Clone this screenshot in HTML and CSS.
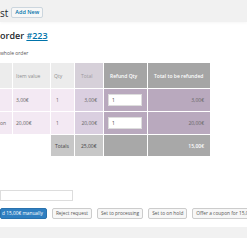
FILE: index.html
```html
<!DOCTYPE html>
<html>
<head>
<meta charset="utf-8">
<link rel="stylesheet" href="styles.css">
</head>
<body>
<header class="topbar">
  <h1 class="title">st</h1>
  <a class="add-new">Add New</a>
</header>
<main class="content">
  <h2 class="order-title">order <a class="order-link">#223</a></h2>
  <p class="note">whole order</p>
  <table class="refund">
    <colgroup>
      <col class="w-prod"><col class="w-value"><col class="w-qty"><col class="w-total"><col class="w-rq"><col class="w-ref">
    </colgroup>
    <thead>
      <tr>
        <th></th>
        <th>Item value</th>
        <th>Qty</th>
        <th class="c-total">Total</th>
        <th class="c-dark">Refund Qty</th>
        <th class="c-dark">Total to be refunded</th>
      </tr>
    </thead>
    <tbody>
      <tr>
        <td class="c-prod"></td>
        <td>3,00€</td>
        <td class="c-qty">1</td>
        <td class="c-total">3,00€</td>
        <td class="c-rq"><input class="qty-input" value="1"></td>
        <td class="c-ref">3,00€</td>
      </tr>
      <tr>
        <td class="c-prod">on</td>
        <td>20,00€</td>
        <td class="c-qty">1</td>
        <td class="c-total">20,00€</td>
        <td class="c-rq"><input class="qty-input" value="1"></td>
        <td class="c-ref">20,00€</td>
      </tr>
    </tbody>
    <tfoot>
      <tr>
        <td class="blank"></td>
        <td class="blank"></td>
        <td class="tot-label">Totals</td>
        <td class="tot-val">25,00€</td>
        <td class="tot-dark"></td>
        <td class="tot-dark tot-final">15,00€</td>
      </tr>
    </tfoot>
  </table>
  <input class="reason">
  <div class="actions">
    <button class="btn btn-primary">d 15,00€ manually</button>
    <button class="btn">Reject request</button>
    <button class="btn">Set to processing</button>
    <button class="btn">Set to on hold</button>
    <button class="btn">Offer a coupon for 15,00€</button>
  </div>
</main>
<div class="footer-band"></div>
</body>
</html>
```

FILE: styles.css
```css
html, body {
  margin: 0;
  padding: 0;
}
body {
  width: 247px;
  height: 247px;
  overflow: hidden;
  background: #fff;
  font-family: "Open Sans", "Liberation Sans", sans-serif;
  color: #444;
}
.topbar {
  height: 22px;
  box-sizing: border-box;
  padding-top: 3px;
  background: #f1f1f1;
  display: flex;
  align-items: center;
  gap: 3px;
  box-shadow: 0 1px 3px rgba(0,0,0,0.04);
}
.title {
  margin: 0;
  font-size: 10px;
  font-weight: 400;
  line-height: 1;
  color: #23282d;
}
.add-new {
  font-size: 5.5px;
  font-weight: 600;
  line-height: 7px;
  padding: 1px 3px;
  color: #0073aa;
  background: #f7f7f7;
  border: 1px solid #ccd6de;
  border-radius: 2px;
}
.content {
  display: flex;
  flex-direction: column;
  align-items: flex-start;
}
.order-title {
  margin: 8px 0 0;
  font-size: 9px;
  font-weight: 600;
  line-height: 12px;
  color: #23282d;
}
.order-link {
  color: #0073aa;
  text-decoration: underline;
}
.note {
  margin: 8px 0 0;
  font-size: 5px;
  line-height: 7px;
  color: #555;
}
.refund {
  margin-top: 6px;
  border-collapse: separate;
  border-spacing: 0;
  table-layout: fixed;
  width: 211px;
  font-size: 5px;
}
.w-prod { width: 13px; }
.w-value { width: 38px; }
.w-qty { width: 24px; }
.w-total { width: 29px; }
.w-rq { width: 44px; }
.w-ref { width: 63px; }
.refund th, .refund td {
  padding: 0 3px;
  border-right: 1px solid #fff;
  border-bottom: 1px solid #fff;
  white-space: nowrap;
  overflow: hidden;
  text-align: left;
}
.refund th {
  height: 25px;
  background: #ececec;
  color: #8c8c8c;
  font-weight: 400;
}
.refund th.c-total {
  background: #d6d0d9;
  color: #9c9a9e;
  padding-left: 6px;
}
.refund th.c-dark {
  background: #a5a5a5;
  color: #fff;
  font-weight: 600;
  padding-left: 6px;
}
.refund tbody td {
  height: 22px;
  background: #f3e9f3;
  color: #666;
}
.refund td.c-prod {
  padding-left: 0;
}
.refund td.c-qty {
  padding-left: 5px;
}
.refund tbody td.c-total {
  background: #dacfe0;
  text-align: right;
  padding-right: 6px;
}
.refund tbody td.c-rq,
.refund tbody td.c-ref {
  background: #b9a9be;
}
.refund td.c-rq {
  padding-left: 4px;
}
.refund td.c-ref {
  text-align: right;
  padding-right: 6px;
}
.qty-input {
  display: block;
  box-sizing: border-box;
  width: 34px;
  height: 12px;
  margin: 0;
  padding: 0 3px;
  border: 1px solid #ddd;
  background: #fff;
  font-family: inherit;
  font-size: 5px;
  color: #444;
}
.refund tfoot td {
  height: 21px;
  color: #444;
}
.refund td.blank {
  background: transparent;
}
.refund td.tot-label {
  background: #c7c7c7;
  padding-left: 4px;
}
.refund td.tot-val {
  background: #c7c7c7;
  padding-left: 6px;
}
.refund td.tot-dark {
  background: #a8a8a8;
}
.refund td.tot-final {
  color: #fff;
  font-weight: 600;
  text-align: right;
  padding-right: 6px;
}
.reason {
  margin-top: 33px;
  box-sizing: border-box;
  width: 73px;
  height: 11px;
  border: 1px solid #ddd;
  background: #fff;
  padding: 0;
}
.actions {
  margin-top: 7px;
  display: flex;
  gap: 5px;
}
.btn {
  flex-shrink: 0;
  height: 11px;
  box-sizing: border-box;
  margin: 0;
  padding: 0 3px;
  font-family: inherit;
  font-size: 4.8px;
  line-height: 9px;
  white-space: nowrap;
  color: #555;
  background: #f7f7f7;
  border: 1px solid #ccc;
  border-radius: 2px;
}
.btn-primary {
  padding-left: 1px;
  color: #fff;
  background: #2f7fc1;
  border-color: #2a72ad;
}
.footer-band {
  margin-top: 8px;
  height: 11px;
  background: #f1f1f1;
}
```
